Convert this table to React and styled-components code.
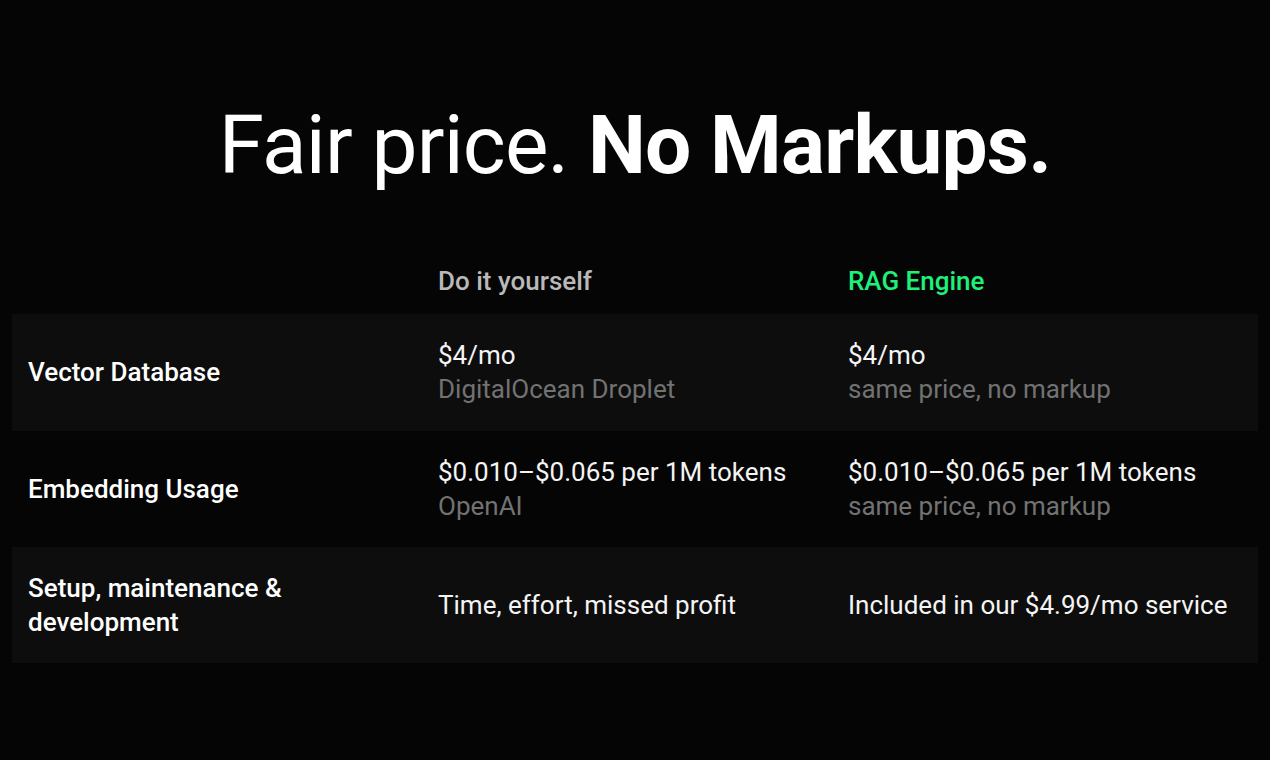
import React from 'react';
import styled, { createGlobalStyle } from 'styled-components';

const GlobalStyle = createGlobalStyle`
  html, body {
    margin: 0;
    padding: 0;
    background: #050505;
  }
  body {
    font-family: Roboto, 'Liberation Sans', sans-serif;
    color: #f2f2f2;
  }
`;

const rows = [
  {
    label: 'Vector Database',
    diy: '$4/mo',
    diyNote: 'DigitalOcean Droplet',
    rag: '$4/mo',
    ragNote: 'same price, no markup',
  },
  {
    label: 'Embedding Usage',
    diy: '$0.010–$0.065 per 1M tokens',
    diyNote: 'OpenAI',
    rag: '$0.010–$0.065 per 1M tokens',
    ragNote: 'same price, no markup',
  },
  {
    label: 'Setup, maintenance & development',
    diy: 'Time, effort, missed profit',
    rag: 'Included in our $4.99/mo service',
  },
];

const App = () => {
  return (
    <Page>
      <GlobalStyle />
      <Title>
        Fair price. <strong>No Markups.</strong>
      </Title>
      <Table>
        <HeadRow>
          <Cell />
          <HeadCell>Do it yourself</HeadCell>
          <HeadCell $accent>RAG Engine</HeadCell>
        </HeadRow>
        {rows.map((r, i) => (
          <Row key={r.label} $striped={i % 2 === 0}>
            <Label>{r.label}</Label>
            <Cell>
              <Value>{r.diy}</Value>
              {r.diyNote && <Note>{r.diyNote}</Note>}
            </Cell>
            <Cell>
              <Value>{r.rag}</Value>
              {r.ragNote && <Note>{r.ragNote}</Note>}
            </Cell>
          </Row>
        ))}
      </Table>
    </Page>
  );
};

export default App;

const Page = styled.div`
  min-height: 760px;
  box-sizing: border-box;
  padding: 95px 12px 0;
  background: #050505;
`;

const Title = styled.h1`
  margin: 0 0 53px;
  text-align: center;
  font-size: 82px;
  line-height: 100px;
  font-weight: 400;
  color: #ffffff;
  letter-spacing: -0.8px;

  strong {
    font-weight: 700;
  }
`;

const Table = styled.div`
  display: flex;
  flex-direction: column;
`;

const HeadRow = styled.div`
  display: grid;
  grid-template-columns: 410px 410px 1fr;
  padding: 16px 0;
`;

const Row = styled.div`
  display: grid;
  grid-template-columns: 410px 410px 1fr;
  align-items: center;
  padding: 24px 0;
  min-height: 68px;
  background: ${(p) => (p.$striped ? '#0d0d0d' : 'transparent')};

  &:nth-child(2) {
    padding-bottom: 25px;
  }
`;

const Cell = styled.div`
  padding: 0 16px;
  font-size: 26px;
  line-height: 34px;
`;

const HeadCell = styled(Cell)`
  font-weight: 500;
  color: ${(p) => (p.$accent ? '#1ef07a' : '#b9b9b9')};
`;

const Label = styled(Cell)`
  font-weight: 500;
  color: #ffffff;
`;

const Value = styled.div`
  color: #f4f4f4;
`;

const Note = styled.div`
  color: #727272;
`;
